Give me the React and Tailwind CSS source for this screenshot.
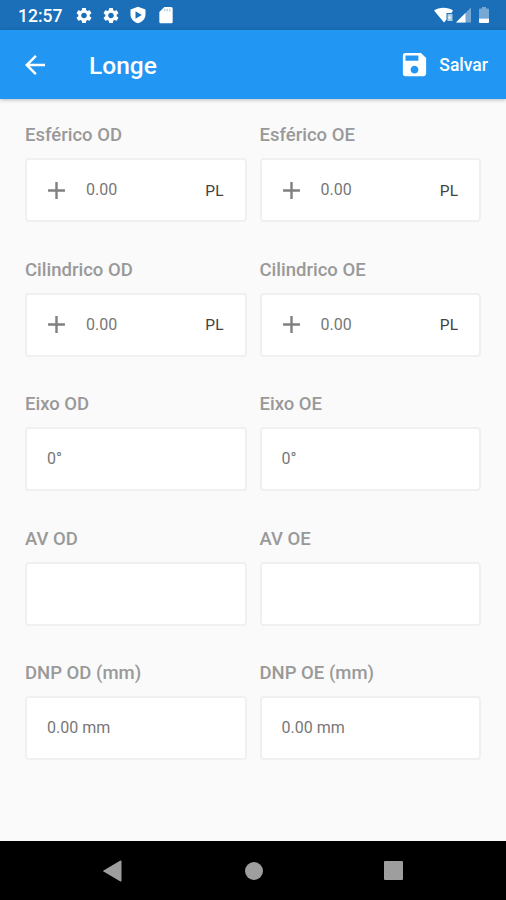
import React from 'react';
import { MdAdd, MdArrowBack, MdSave, MdSettings } from 'react-icons/md';

const rows = [
  { label: 'Esférico', value: '0.00', signed: true },
  { label: 'Cilindrico', value: '0.00', signed: true },
  { label: 'Eixo', value: '0°' },
  { label: 'AV', value: '' },
  { label: 'DNP', value: '0.00 mm', unit: ' (mm)' },
];

function StatusBar() {
  return (
    <div className="flex h-[30px] items-center bg-[#1a6fb8] pl-[18px] pr-[17px] text-white">
      <span className="w-[56px] text-[17.5px] font-medium leading-none pt-[3px]">12:57</span>
      <MdSettings className="h-[19px] w-5 shrink-0" />
      <MdSettings className="ml-[7px] h-[19px] w-5 shrink-0" />
      {/* Play Protect shield */}
      <svg className="ml-[7px] h-5 w-5 shrink-0" viewBox="0 0 24 24" fill="currentColor">
        <path fillRule="evenodd" d="M12 2 3 5.5v6c0 5 3.8 9 9 10.5 5.2-1.5 9-5.5 9-10.5v-6zM9 7.5l7.5 4.5L9 16.5z" />
      </svg>
      {/* SD card */}
      <svg className="ml-[8px] h-5 w-5 shrink-0" viewBox="0 0 24 24" fill="currentColor">
        <path d="M18 2.5h-8L4 8.5V20c0 1.1.9 2 2 2h12c1.1 0 2-.9 2-2V4.5c0-1.1-.9-2-2-2z" />
        <path d="M10.5 4.5v3M13.5 4.5v3M16.5 4.5v3" stroke="#1a6fb8" strokeWidth="1" opacity="0.5" />
      </svg>
      <svg className="ml-auto h-[18px] w-[20px]" viewBox="0 0 20 18" fill="currentColor">
        <path d="M0 4.5C5 .8 14 .8 19 4.5L17.5 7h-5v6.5L10 16.500z" />
        <path d="M13.5 8h5v7h-5z" opacity="0.65" />
        <path d="M14.5 10.500h2v2h-2z" />
      </svg>
      <svg className="ml-[2px] h-[18px] w-[15px]" viewBox="0 0 15 18" fill="currentColor">
        <path d="M15 1.5v15H0z" opacity="0.4" />
        <path d="M9.5 7v9.5H0z" />
      </svg>
      <svg className="ml-[8px] h-[18px] w-[10px]" viewBox="0 0 10 18" fill="currentColor">
        <path d="M3 1h4v1.5h2q1 0 1 1v9H0v-9q0-1 1-1h2z" opacity="0.4" />
        <path d="M0 12.5h10V16q0 1-1 1H1q-1 0-1-1z" />
      </svg>
    </div>
  );
}

function AppBar() {
  return (
    <header className="relative flex h-[69px] items-center bg-[#2196f3] pl-5 pr-[18px] text-white shadow-[0_1px_4px_rgba(0,0,0,0.25)]">
      <MdArrowBack className="h-[30px] w-[30px]" />
      <h1 className="ml-[39px] pt-[4px] text-[24.5px] font-medium leading-none">Longe</h1>
      <button className="ml-auto flex items-center gap-[9px]">
        <MdSave className="h-[31px] w-[31px]" />
        <span className="pt-[2px] text-[17.5px] font-medium leading-none">Salvar</span>
      </button>
    </header>
  );
}

function Field({ label, value, signed }) {
  return (
    <div>
      <label className="block h-[38px] text-[18.5px] font-medium leading-[31px] text-[#999]">{label}</label>
      <div className="flex h-[64px] items-center rounded-[4px] border-2 border-[#f0f0f0] bg-white pl-[20px] pr-[21px] text-[16px]">
        {signed && <MdAdd className="-ml-[5px] mr-[15px] h-[29px] w-[29px] text-[#808080]" />}
        <span className="text-[#777]">{value}</span>
        {signed && <span className="ml-auto pt-[3px] text-[15.5px] text-[#424242]">PL</span>}
      </div>
    </div>
  );
}

function NavBar() {
  return (
    <nav className="flex h-[59px] items-center justify-between bg-black pl-[101px] pr-[103px] text-[#9e9e9e]">
      <svg className="h-[22px] w-[22px]" viewBox="0 0 22 22" fill="currentColor">
        <path d="M19 .8Q20.5 0 20.5 1.5v19q0 1.5-1.5.7L2.5 11.6q-.8-.6 0-1.2z" />
      </svg>
      <div className="h-[18px] w-[18px] rounded-full bg-[#9e9e9e]"></div>
      <div className="h-[19px] w-[19px] rounded-[1px] bg-[#9e9e9e]"></div>
    </nav>
  );
}

export default function App() {
  return (
    <div className="flex h-[900px] w-[506px] flex-col overflow-hidden bg-[#fafafa] font-['Roboto',sans-serif]">
      <StatusBar />
      <AppBar />
      <main className="flex-1 px-[25px] pt-[21px]">
        {rows.map((row) => (
          <div key={row.label} className="grid h-[134.6px] grid-cols-2 gap-x-[13px]">
            <Field label={`${row.label} OD${row.unit || ''}`} value={row.value} signed={row.signed} />
            <Field label={`${row.label} OE${row.unit || ''}`} value={row.value} signed={row.signed} />
          </div>
        ))}
      </main>
      <NavBar />
    </div>
  );
}
